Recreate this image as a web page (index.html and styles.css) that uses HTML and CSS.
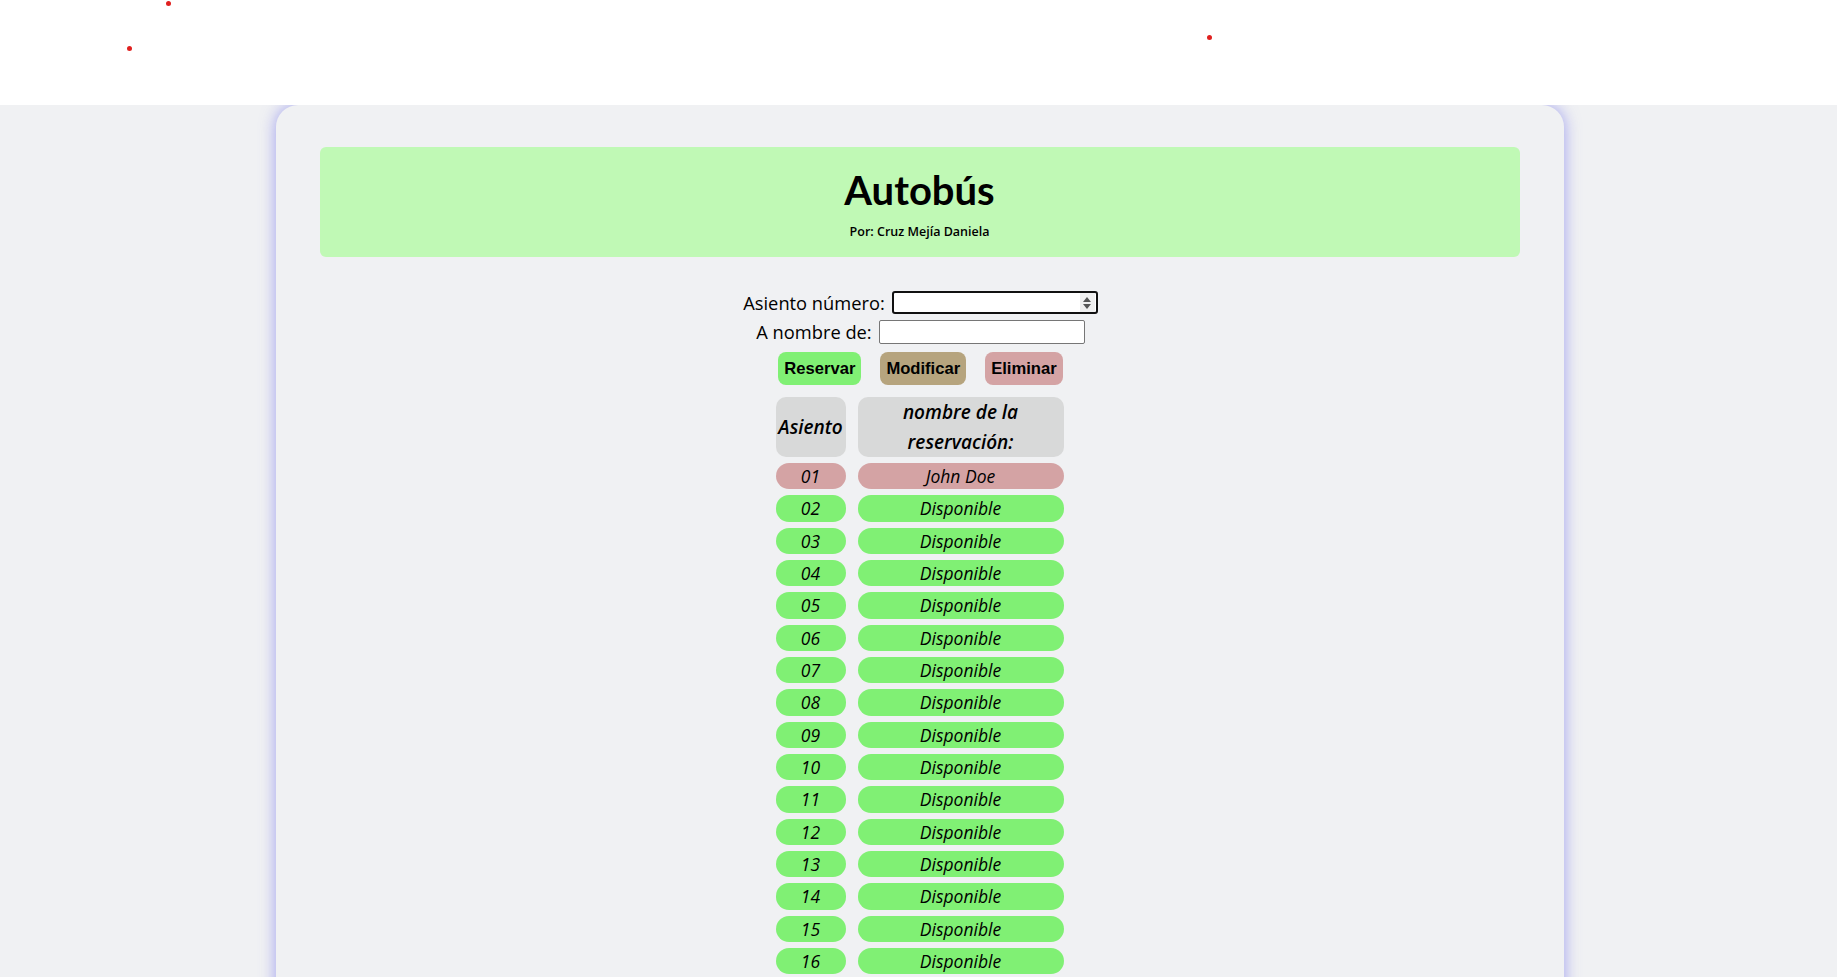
FILE: index.html
```html
<!DOCTYPE html>
<html lang="es">
<head>
<meta charset="utf-8">
<title>Autobús</title>
<link rel="stylesheet" href="styles.css">
</head>
<body>
<div class="top">
  <span class="dot" style="left:166px;top:1px"></span>
  <span class="dot" style="left:127px;top:46px"></span>
  <span class="dot" style="left:1207px;top:35px"></span>
</div>
<main class="page">
  <section class="card">
    <header class="banner">
      <h1 class="title">Autobús</h1>
      <p class="author">Por: Cruz Mejía Daniela</p>
    </header>
    <form class="form">
      <div class="field">
        <label class="label" for="seat">Asiento número:</label>
        <span class="num-wrap">
          <input class="input input-num" id="seat" type="number">
          <span class="spin">
            <svg width="10" height="14" viewBox="0 0 10 14"><path d="M5 1 L9 6 H1 Z M1 8 H9 L5 13 Z" fill="#555"/></svg>
          </span>
        </span>
      </div>
      <div class="field">
        <label class="label" for="name">A nombre de:</label>
        <input class="input input-text" id="name" type="text">
      </div>
      <div class="actions">
        <button type="button" class="btn btn-green">Reservar</button>
        <button type="button" class="btn btn-tan">Modificar</button>
        <button type="button" class="btn btn-pink">Eliminar</button>
      </div>
    </form>
    <table class="seats">
      <thead>
        <tr><th class="col-seat">Asiento</th><th class="col-name">nombre de la reservación:</th></tr>
      </thead>
      <tbody>
        <tr class="taken"><td>01</td><td>John Doe</td></tr>
        <tr><td>02</td><td>Disponible</td></tr>
        <tr><td>03</td><td>Disponible</td></tr>
        <tr><td>04</td><td>Disponible</td></tr>
        <tr><td>05</td><td>Disponible</td></tr>
        <tr><td>06</td><td>Disponible</td></tr>
        <tr><td>07</td><td>Disponible</td></tr>
        <tr><td>08</td><td>Disponible</td></tr>
        <tr><td>09</td><td>Disponible</td></tr>
        <tr><td>10</td><td>Disponible</td></tr>
        <tr><td>11</td><td>Disponible</td></tr>
        <tr><td>12</td><td>Disponible</td></tr>
        <tr><td>13</td><td>Disponible</td></tr>
        <tr><td>14</td><td>Disponible</td></tr>
        <tr><td>15</td><td>Disponible</td></tr>
        <tr><td>16</td><td>Disponible</td></tr>
        <tr><td>17</td><td>Disponible</td></tr>
        <tr><td>18</td><td>Disponible</td></tr>
        <tr><td>19</td><td>Disponible</td></tr>
        <tr><td>20</td><td>Disponible</td></tr>
      </tbody>
    </table>
  </section>
</main>
</body>
</html>
```

FILE: styles.css
```css
* { box-sizing: border-box; }

html, body {
  margin: 0;
  padding: 0;
  background: #f0f1f3;
  font-family: "Open Sans", "Lato", sans-serif;
  color: #000;
}

.top {
  position: relative;
  z-index: 2;
  height: 105px;
  background: #ffffff;
}

.dot {
  position: absolute;
  width: 5px;
  height: 5px;
  border-radius: 50%;
  background: #e0201f;
}

.page {
  display: flex;
  justify-content: center;
  padding-left: 2px;
}

.card {
  width: 1288px;
  min-height: 1200px;
  background: #f0f1f3;
  border-radius: 22px;
  box-shadow: 0 0 16px rgba(105, 105, 235, 0.6);
  padding: 42px 44px;
  display: flex;
  flex-direction: column;
  align-items: center;
}

.banner {
  align-self: stretch;
  height: 110px;
  background: #c0f9b5;
  border-radius: 6px;
  display: flex;
  flex-direction: column;
  align-items: center;
  padding-top: 18px;
}

.title {
  margin: 0;
  font-family: "Lato", sans-serif;
  font-size: 40px;
  line-height: 50px;
  font-weight: 700;
}

.author {
  margin: 9px 0 0;
  font-size: 12.5px;
  line-height: 16px;
  font-weight: 600;
}

.form {
  margin-top: 31px;
  display: flex;
  flex-direction: column;
  align-items: center;
  padding-left: 2px;
}

.field {
  display: flex;
  align-items: center;
  gap: 7px;
  height: 29px;
}

.label {
  font-size: 18.3px;
}

.num-wrap {
  position: relative;
  display: block;
}

.input {
  display: block;
  width: 206px;
  height: 24px;
  background: #fff;
  font: 14px "Liberation Sans", sans-serif;
  padding: 1px 4px;
}

.input-num {
  border: 2px solid #111;
  border-radius: 3px;
  height: 23px;
  outline: none;
}

.input-num::-webkit-inner-spin-button,
.input-num::-webkit-outer-spin-button {
  -webkit-appearance: none;
  margin: 0;
}

.input-text {
  border: 1px solid #767676;
  border-radius: 2px;
}

.spin {
  position: absolute;
  right: 3px;
  top: 2px;
  bottom: 2px;
  width: 15px;
  background: #efefef;
  display: flex;
  align-items: center;
  justify-content: center;
}

.actions {
  display: flex;
  gap: 19px;
  margin-top: 6px;
}

.btn {
  font: 700 16.6px "Liberation Sans", Arial, sans-serif;
  line-height: 19px;
  padding: 7px 6px;
  border: none;
  border-radius: 8px;
  color: #000;
}

.btn-green { background: #80f074; }
.btn-tan { background: #b6a47e; }
.btn-pink { background: #d4a3a4; }

.seats {
  margin-top: 6px;
  border-spacing: 12px 6px;
  font-style: italic;
}

.seats th {
  background: #d8d9d9;
  border-radius: 10px;
  font-size: 19px;
  font-weight: 600;
  line-height: 30px;
  height: 60px;
  padding: 0;
  text-align: center;
}

.col-seat { width: 70px; }
.col-name { width: 206px; }

.seats td {
  background: #80f074;
  border-radius: 13px;
  height: 26.33px;
  padding: 0;
  font-size: 17.5px;
  line-height: 20px;
  text-align: center;
}

.seats tr.taken td { background: #d4a3a4; }
```
